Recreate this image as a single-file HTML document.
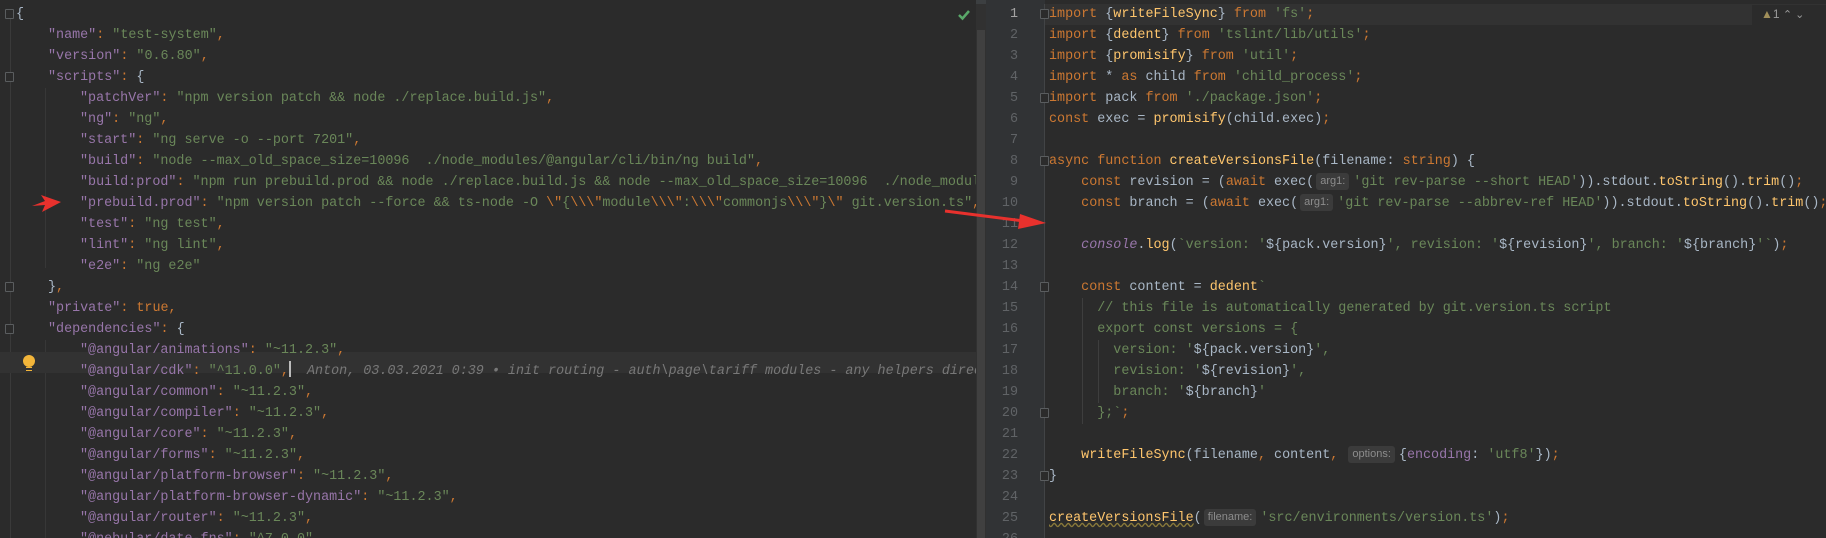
<!DOCTYPE html>
<html><head><meta charset="utf-8">
<style>
*{margin:0;padding:0;box-sizing:border-box}
body{width:1826px;height:538px;background:#2b2b2b;overflow:hidden;position:relative;font-family:"Liberation Mono",monospace;font-size:13.4px;color:#a9b7c6}
.ln{position:absolute;height:21px;line-height:21px;white-space:pre}
.k{color:#cc7832}.s{color:#6a8759}.p{color:#9876aa}.f{color:#ffc66d}.n{color:#6897bb}.g{color:#606366}
.it{font-style:italic}
.hint{display:inline-block;font-family:"Liberation Sans",sans-serif;font-size:11px;color:#8c8c8c;background:#3b3b3b;border-radius:3px;height:17px;line-height:17px;padding:0 4px;vertical-align:1px;margin:0 4px 0 2px}
.fold{position:absolute;width:9px;height:10px;border:1px solid #5a5d5f;border-radius:1px;background:#2b2b2b}
#L{position:absolute;left:0;top:0;width:976px;height:538px;overflow:hidden;background:#2b2b2b}
#R{position:absolute;left:986px;top:0;width:840px;height:538px;overflow:hidden;background:#2b2b2b}
</style></head><body>
<div style="position:absolute;left:0;top:0;width:1826px;height:4px;background:#3c3f41"></div>
<div style="position:absolute;left:802px;top:0;width:120px;height:3px;background:#4a88c7"></div>
<div style="position:absolute;left:1450px;top:0;width:100px;height:3px;background:#5a5d5f"></div>

<div id="L">
<div style="position:absolute;left:10px;top:10px;width:1px;height:528px;background:#3a3a3a"></div>
<div style="position:absolute;left:45px;top:88px;width:1px;height:180px;background:#373737"></div>
<div style="position:absolute;left:45px;top:340px;width:1px;height:200px;background:#373737"></div>
<div style="position:absolute;left:0;top:352px;width:976px;height:21px;background:#323232"></div>
<div class="fold" style="left:5px;top:9px"></div>
<div class="fold" style="left:5px;top:72px"></div>
<div class="fold" style="left:5px;top:282px"></div>
<div class="fold" style="left:5px;top:324px"></div>
<div style="position:absolute;left:23px;top:355px;width:12px;height:12px;border-radius:6px;background:#f2b53a"></div>
<div style="position:absolute;left:26px;top:367px;width:6px;height:4px;border-top:1px solid #f2b53a;border-bottom:1px solid #f2b53a"></div>
<div class="ln" style="left:16px;top:4px">{</div>
<div class="ln" style="left:48px;top:25px"><span class="p">"name"</span><span class="k">: </span><span class="s">"test-system"</span><span class="k">,</span></div>
<div class="ln" style="left:48px;top:46px"><span class="p">"version"</span><span class="k">: </span><span class="s">"0.6.80"</span><span class="k">,</span></div>
<div class="ln" style="left:48px;top:67px"><span class="p">"scripts"</span><span class="k">: </span>{</div>
<div class="ln" style="left:80px;top:88px"><span class="p">"patchVer"</span><span class="k">: </span><span class="s">"npm version patch &amp;&amp; node ./replace.build.js"</span><span class="k">,</span></div>
<div class="ln" style="left:80px;top:109px"><span class="p">"ng"</span><span class="k">: </span><span class="s">"ng"</span><span class="k">,</span></div>
<div class="ln" style="left:80px;top:130px"><span class="p">"start"</span><span class="k">: </span><span class="s">"ng serve -o --port 7201"</span><span class="k">,</span></div>
<div class="ln" style="left:80px;top:151px"><span class="p">"build"</span><span class="k">: </span><span class="s">"node --max_old_space_size=10096  ./node_modules/@angular/cli/bin/ng build"</span><span class="k">,</span></div>
<div class="ln" style="left:80px;top:172px"><span class="p">"build:prod"</span><span class="k">: </span><span class="s">"npm run prebuild.prod &amp;&amp; node ./replace.build.js &amp;&amp; node --max_old_space_size=10096  ./node_modules/@angular</span></div>
<div class="ln" style="left:80px;top:193px"><span class="p">"prebuild.prod"</span><span class="k">: </span><span class="s">"npm version patch --force &amp;&amp; ts-node -O </span><span class="k">\"</span><span class="s">{</span><span class="k">\\\"</span><span class="s">module</span><span class="k">\\\"</span><span class="s">:</span><span class="k">\\\"</span><span class="s">commonjs</span><span class="k">\\\"</span><span class="s">}</span><span class="k">\"</span><span class="s"> git.version.ts"</span><span class="k">,</span></div>
<div class="ln" style="left:80px;top:214px"><span class="p">"test"</span><span class="k">: </span><span class="s">"ng test"</span><span class="k">,</span></div>
<div class="ln" style="left:80px;top:235px"><span class="p">"lint"</span><span class="k">: </span><span class="s">"ng lint"</span><span class="k">,</span></div>
<div class="ln" style="left:80px;top:256px"><span class="p">"e2e"</span><span class="k">: </span><span class="s">"ng e2e"</span></div>
<div class="ln" style="left:48px;top:277px">}<span class="k">,</span></div>
<div class="ln" style="left:48px;top:298px"><span class="p">"private"</span><span class="k">: true,</span></div>
<div class="ln" style="left:48px;top:319px"><span class="p">"dependencies"</span><span class="k">: </span>{</div>
<div class="ln" style="left:80px;top:340px"><span class="p">"@angular/animations"</span><span class="k">: </span><span class="s">"~11.2.3"</span><span class="k">,</span></div>
<div class="ln" style="left:80px;top:361px"><span class="p">"@angular/cdk"</span><span class="k">: </span><span class="s">"^11.0.0"</span><span class="k">,</span><span style="display:inline-block;width:2px;height:16px;background:#bbb;vertical-align:-3px"></span><span class="it" style="color:#787878">  Anton, 03.03.2021 0:39 • init routing - auth\page\tariff modules - any helpers directives</span></div>
<div class="ln" style="left:80px;top:382px"><span class="p">"@angular/common"</span><span class="k">: </span><span class="s">"~11.2.3"</span><span class="k">,</span></div>
<div class="ln" style="left:80px;top:403px"><span class="p">"@angular/compiler"</span><span class="k">: </span><span class="s">"~11.2.3"</span><span class="k">,</span></div>
<div class="ln" style="left:80px;top:424px"><span class="p">"@angular/core"</span><span class="k">: </span><span class="s">"~11.2.3"</span><span class="k">,</span></div>
<div class="ln" style="left:80px;top:445px"><span class="p">"@angular/forms"</span><span class="k">: </span><span class="s">"~11.2.3"</span><span class="k">,</span></div>
<div class="ln" style="left:80px;top:466px"><span class="p">"@angular/platform-browser"</span><span class="k">: </span><span class="s">"~11.2.3"</span><span class="k">,</span></div>
<div class="ln" style="left:80px;top:487px"><span class="p">"@angular/platform-browser-dynamic"</span><span class="k">: </span><span class="s">"~11.2.3"</span><span class="k">,</span></div>
<div class="ln" style="left:80px;top:508px"><span class="p">"@angular/router"</span><span class="k">: </span><span class="s">"~11.2.3"</span><span class="k">,</span></div>
<div class="ln" style="left:80px;top:529px"><span class="p">"@nebular/date-fns"</span><span class="k">: </span><span class="s">"^7.0.0"</span><span class="k">,</span></div>
<div style="position:absolute;left:952px;top:4px;width:24px;height:24px;background:#2b2b2b"></div>
<svg style="position:absolute;left:957px;top:9px" width="14" height="12"><path d="M2 6 L5.5 9.5 L12 2" stroke="#59a869" stroke-width="2.5" fill="none"/></svg>
<svg style="position:absolute;left:31px;top:195px" width="32" height="18"><path d="M30 7 L10 0 L14 6 L1 11 L14 10 L11 17 Z" fill="#e8312d"/></svg>
</div>
<div style="position:absolute;left:976px;top:4px;width:10px;height:534px;background:#313131"></div>
<div style="position:absolute;left:977px;top:30px;width:8px;height:508px;background:#404040"></div>

<div id="R">
<div style="position:absolute;left:0;top:0;width:59px;height:538px;background:#313335"></div>
<div style="position:absolute;left:58px;top:4px;width:782px;height:21px;background:#323232"></div>
<div style="position:absolute;left:58px;top:4px;width:1px;height:534px;background:#424446"></div>
<div style="position:absolute;left:96px;top:298px;width:1px;height:126px;background:#3e3e3e"></div>
<div style="position:absolute;left:112px;top:340px;width:1px;height:63px;background:#3e3e3e"></div>
<div class="fold" style="left:54px;top:9px"></div>
<div class="fold" style="left:54px;top:93px"></div>
<div class="fold" style="left:54px;top:156px"></div>
<div class="fold" style="left:54px;top:282px"></div>
<div class="fold" style="left:54px;top:408px"></div>
<div class="fold" style="left:54px;top:471px"></div>
<div class="ln g" style="left:2px;width:30px;text-align:right;top:4px;color:#a4a3a3">1</div>
<div class="ln g" style="left:2px;width:30px;text-align:right;top:25px">2</div>
<div class="ln g" style="left:2px;width:30px;text-align:right;top:46px">3</div>
<div class="ln g" style="left:2px;width:30px;text-align:right;top:67px">4</div>
<div class="ln g" style="left:2px;width:30px;text-align:right;top:88px">5</div>
<div class="ln g" style="left:2px;width:30px;text-align:right;top:109px">6</div>
<div class="ln g" style="left:2px;width:30px;text-align:right;top:130px">7</div>
<div class="ln g" style="left:2px;width:30px;text-align:right;top:151px">8</div>
<div class="ln g" style="left:2px;width:30px;text-align:right;top:172px">9</div>
<div class="ln g" style="left:2px;width:30px;text-align:right;top:193px">10</div>
<div class="ln g" style="left:2px;width:30px;text-align:right;top:214px">11</div>
<div class="ln g" style="left:2px;width:30px;text-align:right;top:235px">12</div>
<div class="ln g" style="left:2px;width:30px;text-align:right;top:256px">13</div>
<div class="ln g" style="left:2px;width:30px;text-align:right;top:277px">14</div>
<div class="ln g" style="left:2px;width:30px;text-align:right;top:298px">15</div>
<div class="ln g" style="left:2px;width:30px;text-align:right;top:319px">16</div>
<div class="ln g" style="left:2px;width:30px;text-align:right;top:340px">17</div>
<div class="ln g" style="left:2px;width:30px;text-align:right;top:361px">18</div>
<div class="ln g" style="left:2px;width:30px;text-align:right;top:382px">19</div>
<div class="ln g" style="left:2px;width:30px;text-align:right;top:403px">20</div>
<div class="ln g" style="left:2px;width:30px;text-align:right;top:424px">21</div>
<div class="ln g" style="left:2px;width:30px;text-align:right;top:445px">22</div>
<div class="ln g" style="left:2px;width:30px;text-align:right;top:466px">23</div>
<div class="ln g" style="left:2px;width:30px;text-align:right;top:487px">24</div>
<div class="ln g" style="left:2px;width:30px;text-align:right;top:508px">25</div>
<div class="ln g" style="left:2px;width:30px;text-align:right;top:529px">26</div>

<div class="ln" style="left:63px;top:4px"><span class="k">import </span>{<span class="f">writeFileSync</span>} <span class="k">from </span><span class="s">'fs'</span><span class="k">;</span></div>
<div class="ln" style="left:63px;top:25px"><span class="k">import </span>{<span class="f">dedent</span>} <span class="k">from </span><span class="s">'tslint/lib/utils'</span><span class="k">;</span></div>
<div class="ln" style="left:63px;top:46px"><span class="k">import </span>{<span class="f">promisify</span>} <span class="k">from </span><span class="s">'util'</span><span class="k">;</span></div>
<div class="ln" style="left:63px;top:67px"><span class="k">import </span>* <span class="k">as </span>child <span class="k">from </span><span class="s">'child_process'</span><span class="k">;</span></div>
<div class="ln" style="left:63px;top:88px"><span class="k">import </span>pack <span class="k">from </span><span class="s">'./package.json'</span><span class="k">;</span></div>
<div class="ln" style="left:63px;top:109px"><span class="k">const </span>exec = <span class="f">promisify</span>(child.exec)<span class="k">;</span></div>
<div class="ln" style="left:63px;top:151px"><span class="k">async function </span><span class="f">createVersionsFile</span>(filename: <span class="k">string</span>) {</div>
<div class="ln" style="left:63px;top:172px">    <span class="k">const </span>revision = (<span class="k">await </span>exec(<span class="hint">arg1:</span><span class="s">'git rev-parse --short HEAD'</span>)).stdout.<span class="f">toString</span>().<span class="f">trim</span>()<span class="k">;</span></div>
<div class="ln" style="left:63px;top:193px">    <span class="k">const </span>branch = (<span class="k">await </span>exec(<span class="hint">arg1:</span><span class="s">'git rev-parse --abbrev-ref HEAD'</span>)).stdout.<span class="f">toString</span>().<span class="f">trim</span>()<span class="k">;</span></div>
<div class="ln" style="left:63px;top:235px">    <span class="p it">console</span>.<span class="f">log</span>(<span class="s">`version: '</span>${pack.version}<span class="s">', revision: '</span>${revision}<span class="s">', branch: '</span>${branch}<span class="s">'`</span>)<span class="k">;</span></div>
<div class="ln" style="left:63px;top:277px">    <span class="k">const </span>content = <span class="f">dedent</span><span class="s">`</span></div>
<div class="ln s" style="left:63px;top:298px">      // this file is automatically generated by git.version.ts script</div>
<div class="ln s" style="left:63px;top:319px">      export const versions = {</div>
<div class="ln" style="left:63px;top:340px"><span class="s">        version: '</span>${pack.version}<span class="s">',</span></div>
<div class="ln" style="left:63px;top:361px"><span class="s">        revision: '</span>${revision}<span class="s">',</span></div>
<div class="ln" style="left:63px;top:382px"><span class="s">        branch: '</span>${branch}<span class="s">'</span></div>
<div class="ln" style="left:63px;top:403px"><span class="s">      };`</span><span class="k">;</span></div>
<div class="ln" style="left:63px;top:445px">    <span class="f">writeFileSync</span>(filename<span class="k">, </span>content<span class="k">, </span><span class="hint">options:</span>{<span class="p">encoding</span>: <span class="s">'utf8'</span>})<span class="k">;</span></div>
<div class="ln" style="left:63px;top:466px">}</div>
<div class="ln" style="left:63px;top:508px"><span class="f" style="text-decoration:underline wavy #8a7a3a">createVersionsFile</span>(<span class="hint">filename:</span><span class="s">'src/environments/version.ts'</span>)<span class="k">;</span></div>

<div style="position:absolute;left:766px;top:5px;width:74px;height:20px;background:#2b2b2b"></div>
<div class="ln" style="left:775px;top:4px;font-family:'Liberation Sans',sans-serif;font-size:12px;color:#9a9a9a"><span style="color:#a08f5a">▲</span>1 <span style="font-size:11px">&#8963; &#8964;</span></div>
</div>
<svg style="position:absolute;left:944px;top:204px" width="104" height="26"><line x1="1" y1="7" x2="80" y2="17" stroke="#e8312d" stroke-width="3"/><path d="M102 19 L76 10 L74 25 Z" fill="#e8312d"/></svg>
</body></html>
